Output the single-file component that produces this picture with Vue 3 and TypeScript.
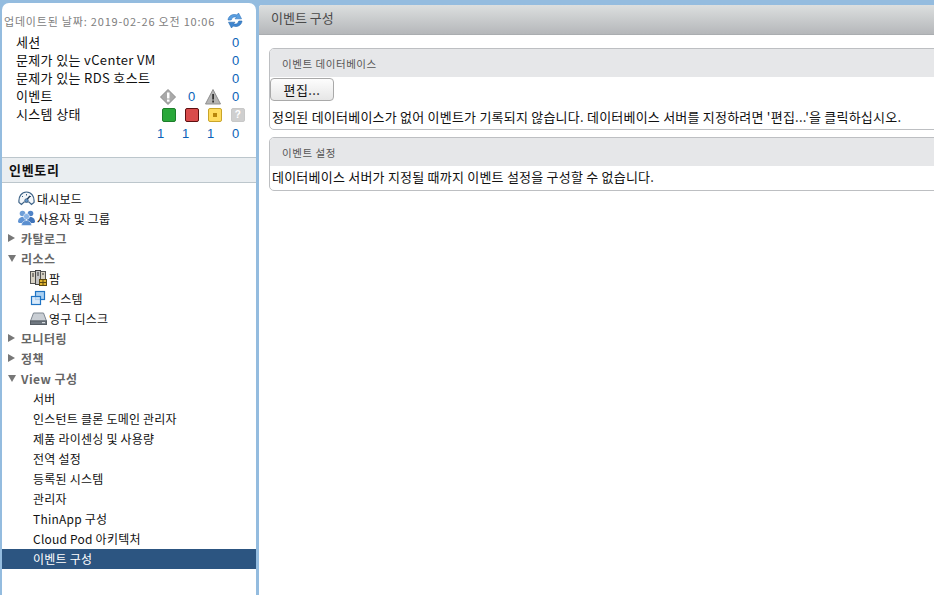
<template>
  <div class="page">
    <aside class="side">
      <section class="status">
        <div class="updated">
          <span>업데이트된 날짜: 2019-02-26 오전 10:06</span>
          <svg class="refresh" width="16" height="17" viewBox="0 0 16 17">
            <path d="M1 8 C1.500 3.500 6 1.500 10 3 L11.500 1 L14.500 6.800 L8 6.800 L9.500 5.300 C7 4.300 4.800 5.300 4.200 8 Z" fill="#5a9fe0" stroke="#2f74bd" stroke-width=".6" />
            <path d="M15 9 C14.500 13.500 10 15.500 6 14 L4.500 16 L1.500 10.200 L8 10.200 L6.500 11.700 C9 12.700 11.200 11.700 11.800 9 Z" fill="#3f86d0" stroke="#2568ad" stroke-width=".6" />
          </svg>
        </div>
        <div class="stat-row" v-for="s in simpleStats" :key="s">
          <span class="stat-label">{{ s }}</span>
          <span class="num col4">0</span>
        </div>
        <div class="stat-row">
          <span class="stat-label">이벤트</span>
          <svg class="ico col1" width="16" height="16" viewBox="0 0 16 16">
            <path d="M8 .5 L15.500 8 L8 15.500 L.5 8 Z" fill="#a9a9a9" stroke="#8c8c8c" />
            <rect x="7" y="3.500" width="2.500" height="6" fill="#fff" />
            <rect x="7" y="10.500" width="2.500" height="2.200" fill="#fff" />
          </svg>
          <span class="num col2">0</span>
          <svg class="ico col3" width="16" height="16" viewBox="0 0 16 16">
            <path d="M8 .5 L15.500 15 L.5 15 Z" fill="#b5b5b5" stroke="#8f8f8f" />
            <rect x="7.200" y="5" width="1.800" height="5.500" fill="#333" />
            <rect x="7.200" y="11.500" width="1.800" height="2" fill="#333" />
          </svg>
          <span class="num col4">0</span>
        </div>
        <div class="stat-row">
          <span class="stat-label">시스템 상태</span>
          <span class="box col1 green"></span>
          <span class="box col2 red"></span>
          <span class="box col3 yellow"><i></i></span>
          <span class="box col4 grey">?</span>
        </div>
        <div class="stat-row counts">
          <span class="num c1">1</span>
          <span class="num c2">1</span>
          <span class="num c3">1</span>
          <span class="num c4">0</span>
        </div>
      </section>

      <h2 class="inv-title">인벤토리</h2>

      <nav class="tree">
        <div class="row lvl1">
          <svg width="17" height="16" viewBox="0 0 17 16">
            <path d="M3.500 14.500 L1 12.500 C.2 6 4 2 8.500 2 C13 2 16.800 6 16 12.500 L13.500 14.500 L11 12 H6 Z" fill="#f4f7fa" stroke="#3f6488" stroke-width="1.200" />
            <path d="M4 6 L5 7 M8.500 4 V5.500 M13 6 L12 7" stroke="#3f6488" />
            <path d="M8.500 10 L12 6" stroke="#1f3a57" stroke-width="1.400" />
            <circle cx="8.500" cy="10.500" r="1.800" fill="#5f93c7" stroke="#2b4a6b" stroke-width=".6" />
          </svg>
          <span>대시보드</span>
        </div>
        <div class="row lvl1">
          <svg width="17" height="16" viewBox="0 0 17 16">
            <circle cx="4.500" cy="3.500" r="2.800" fill="#6f9fd8" />
            <circle cx="12.500" cy="3.500" r="2.800" fill="#4f83c7" />
            <path d="M0 12 C0 6 7 6 8 9 L8 13 L1 13 Z" fill="#5f93d3" />
            <path d="M9 9 C10 6 17 6 17 12 L16 13 L9 13 Z" fill="#3f74ba" />
            <circle cx="8.500" cy="6.500" r="3" fill="#8ab4e6" stroke="#fff" stroke-width=".5" />
            <path d="M3.500 15.500 C3.500 8.800 13.500 8.800 13.500 15.500 Z" fill="#5a8fd0" stroke="#fff" stroke-width=".5" />
          </svg>
          <span>사용자 및 그룹</span>
        </div>
        <div class="row head"><i class="tri right"></i><span>카탈로그</span></div>
        <div class="row head"><i class="tri down"></i><span>리소스</span></div>
        <div class="row lvl2">
          <svg width="17" height="16" viewBox="0 0 17 16">
            <rect x="0.500" y="1.500" width="5" height="12" fill="#d8d2c4" stroke="#555" />
            <rect x="5.500" y=".5" width="5" height="14" fill="#c4c4c4" stroke="#444" />
            <rect x="10.500" y="1.500" width="5" height="8" fill="#d8d2c4" stroke="#555" />
            <path d="M2 4 H4 M2 6 H4 M7 3 H9 M7 5 H9 M12 4 H14" stroke="#333" />
            <rect x="9.500" y="9.500" width="7" height="6" fill="#e0b431" stroke="#5e4a10" />
            <path d="M13 9.500 V15.500 M9.500 12.500 H16.500" stroke="#5e4a10" />
          </svg>
          <span>팜</span>
        </div>
        <div class="row lvl2">
          <svg width="17" height="16" viewBox="0 0 17 16">
            <rect x="5.500" y="1.500" width="9" height="8" fill="#a9d0f2" stroke="#1f74c4" stroke-width="1.200" />
            <rect x="1.500" y="6.500" width="9" height="8" fill="#cfe5f9" fill-opacity=".8" stroke="#1f74c4" stroke-width="1.200" />
          </svg>
          <span>시스템</span>
        </div>
        <div class="row lvl2">
          <svg width="17" height="16" viewBox="0 0 17 16">
            <path d="M3.500 3 H13.500 L16.500 11 H.5 Z" fill="#c9ced4" stroke="#7e8790" />
            <rect x=".5" y="11" width="16" height="3.500" fill="#6f7780" stroke="#555c63" />
            <rect x="12" y="12" width="3" height="1.200" fill="#d5dade" />
          </svg>
          <span>영구 디스크</span>
        </div>
        <div class="row head"><i class="tri right"></i><span>모니터링</span></div>
        <div class="row head"><i class="tri right"></i><span>정책</span></div>
        <div class="row head"><i class="tri down"></i><span>View 구성</span></div>
        <div
          v-for="item in viewItems"
          :key="item"
          class="row leaf"
          :class="{ selected: item === current }"
        >
          <span>{{ item }}</span>
        </div>
      </nav>
    </aside>

    <main class="main">
      <header class="main-head">이벤트 구성</header>
      <div class="main-body">
        <section class="card">
          <h3 class="card-title">이벤트 데이터베이스</h3>
          <button class="edit" type="button">편집...</button>
          <p class="msg">정의된 데이터베이스가 없어 이벤트가 기록되지 않습니다. 데이터베이스 서버를 지정하려면 '편집...'을 클릭하십시오.</p>
        </section>
        <section class="card">
          <h3 class="card-title">이벤트 설정</h3>
          <p class="msg">데이터베이스 서버가 지정될 때까지 이벤트 설정을 구성할 수 없습니다.</p>
        </section>
      </div>
    </main>
  </div>
</template>

<script setup lang="ts">
const simpleStats: string[] = ['세션', '문제가 있는 vCenter VM', '문제가 있는 RDS 호스트']

const viewItems: string[] = [
  '서버',
  '인스턴트 클론 도메인 관리자',
  '제품 라이센싱 및 사용량',
  '전역 설정',
  '등록된 시스템',
  '관리자',
  'ThinApp 구성',
  'Cloud Pod 아키텍처',
  '이벤트 구성',
]

const current = '이벤트 구성'
</script>

<style>
html,
body {
  margin: 0;
  background: #fff;
}
</style>

<style scoped>
.page {
  width: 934px;
  height: 595px;
  overflow: hidden;
  display: flex;
  background: #94bcdf;
  font-family: "Noto Sans CJK KR", "Liberation Sans", sans-serif;
  font-size: 12px;
  letter-spacing: .22px;
  color: #111;
  box-sizing: border-box;
}

.side {
  width: 254px;
  height: 592px;
  margin: 3px 0 0 2px;
  background: #fff;
  border-radius: 7px 7px 0 0;
  flex-shrink: 0;
}

.status {
  height: 154px;
  box-sizing: border-box;
  padding-top: 5px;
  position: relative;
}

.updated {
  display: flex;
  align-items: center;
  justify-content: space-between;
  height: 25px;
  padding: 0 13px 0 2px;
  font-size: 11px;
  letter-spacing: .8px;
  color: #808080;
}

.stat-row {
  position: relative;
  height: 18px;
  line-height: 18px;
  padding-left: 14px;
}

.stat-label {
  font-size: 13px;
  letter-spacing: .35px;
}

.num {
  position: absolute;
  top: 1px;
  font-family: "Liberation Sans", sans-serif;
  font-size: 13px;
  color: #0a62b8;
}

.col4 { left: 230px; }
.col2 { left: 186px; }

.ico,
.box {
  position: absolute;
  top: 3px;
}

.ico { top: 2px; }
.ico.col1 { left: 158px; }
.ico.col3 { left: 203px; }

.box {
  width: 12px;
  height: 12px;
  border-radius: 2px;
  border: 1px solid;
}

.box.col1 { left: 160px; }
.box.col2 { left: 183px; }
.box.col3 { left: 206px; }
.box.col4 { left: 229px; }

.green { background: #2aa83a; border-color: #1d7d2b; }
.red { background: #d94b4b; border-color: #5e0f10; }
.yellow { background: #ffdc5e; border-color: #c9a52a; display: flex; align-items: center; justify-content: center; }
.yellow i { width: 4px; height: 4px; background: #b8860b; }
.grey {
  background: #cfcfcf;
  border-color: #c8c8c8;
  color: #fff;
  font: 700 10px/12px "Liberation Sans", sans-serif;
  text-align: center;
}

.counts { height: 20px; line-height: 20px; }
.c1 { left: 155px; }
.c2 { left: 180px; }
.c3 { left: 205px; }
.c4 { left: 230px; }

.inv-title {
  margin: 0;
  height: 24px;
  line-height: 23px;
  padding-left: 7px;
  background: #eaeef1;
  border-top: 1px solid #bcc6cc;
  border-bottom: 1px solid #bcc6cc;
  font-size: 13px;
  font-weight: 700;
  letter-spacing: .7px;
}

.tree {
  padding-top: 6px;
}

.row {
  height: 20px;
  box-sizing: border-box;
  padding-bottom: 2px;
  display: flex;
  align-items: center;
  gap: 2px;
  white-space: nowrap;
}

.lvl1 { padding-left: 16px; }
.lvl2 { padding-left: 28px; }
.leaf { padding-left: 31px; }

.head {
  padding-left: 6px;
  gap: 5px;
  font-weight: 700;
  color: #666;
  letter-spacing: .5px;
}

.tri {
  width: 0;
  height: 0;
  display: block;
}

.tri.right {
  border-left: 7px solid #777;
  border-top: 4px solid transparent;
  border-bottom: 4px solid transparent;
  margin-right: 1px;
}

.tri.down {
  border-top: 7px solid #777;
  border-left: 4px solid transparent;
  border-right: 4px solid transparent;
}

.selected {
  background: #2c5581;
  color: #fff;
}

.main {
  flex: 1;
  min-width: 0;
  margin: 5px 0 0 3px;
  height: 590px;
  background: #fff;
  border-radius: 3px 0 0 0;
  overflow: hidden;
}

.main-head {
  height: 29px;
  line-height: 26px;
  padding-left: 12px;
  font-size: 13px;
  letter-spacing: 0;
  color: #4a4a4a;
  background: linear-gradient(#dcdfdf, #b5b7ba);
  border-bottom: 1px solid #aaadb0;
}

.main-body {
  padding: 13px 0 0 10px;
  display: flex;
  flex-direction: column;
  gap: 7px;
}

.card {
  width: 700px;
  border: 1px solid #bdbfc2;
  border-radius: 5px 0 0 5px;
  overflow: hidden;
}

.card-title {
  margin: 0;
  height: 28px;
  line-height: 29px;
  padding-left: 12px;
  background: #e6e7e9;
  font-size: 10.5px;
  font-weight: 400;
  letter-spacing: .55px;
  color: #555;
}

.edit {
  display: block;
  width: 64px;
  height: 23px;
  margin: 1px 0 4px 0;
  padding: 0;
  background: linear-gradient(#fdfdfd, #e6e6e6);
  border: 1px solid #a9a9a9;
  border-radius: 4px;
  font: 13px "Noto Sans CJK KR", sans-serif;
  letter-spacing: .4px;
  color: #111;
}

.msg {
  margin: 0;
  height: 24px;
  line-height: 21px;
  padding-left: 2px;
  font-size: 13px;
  white-space: nowrap;
}

.edit + .msg {
  line-height: 23px;
}
</style>
